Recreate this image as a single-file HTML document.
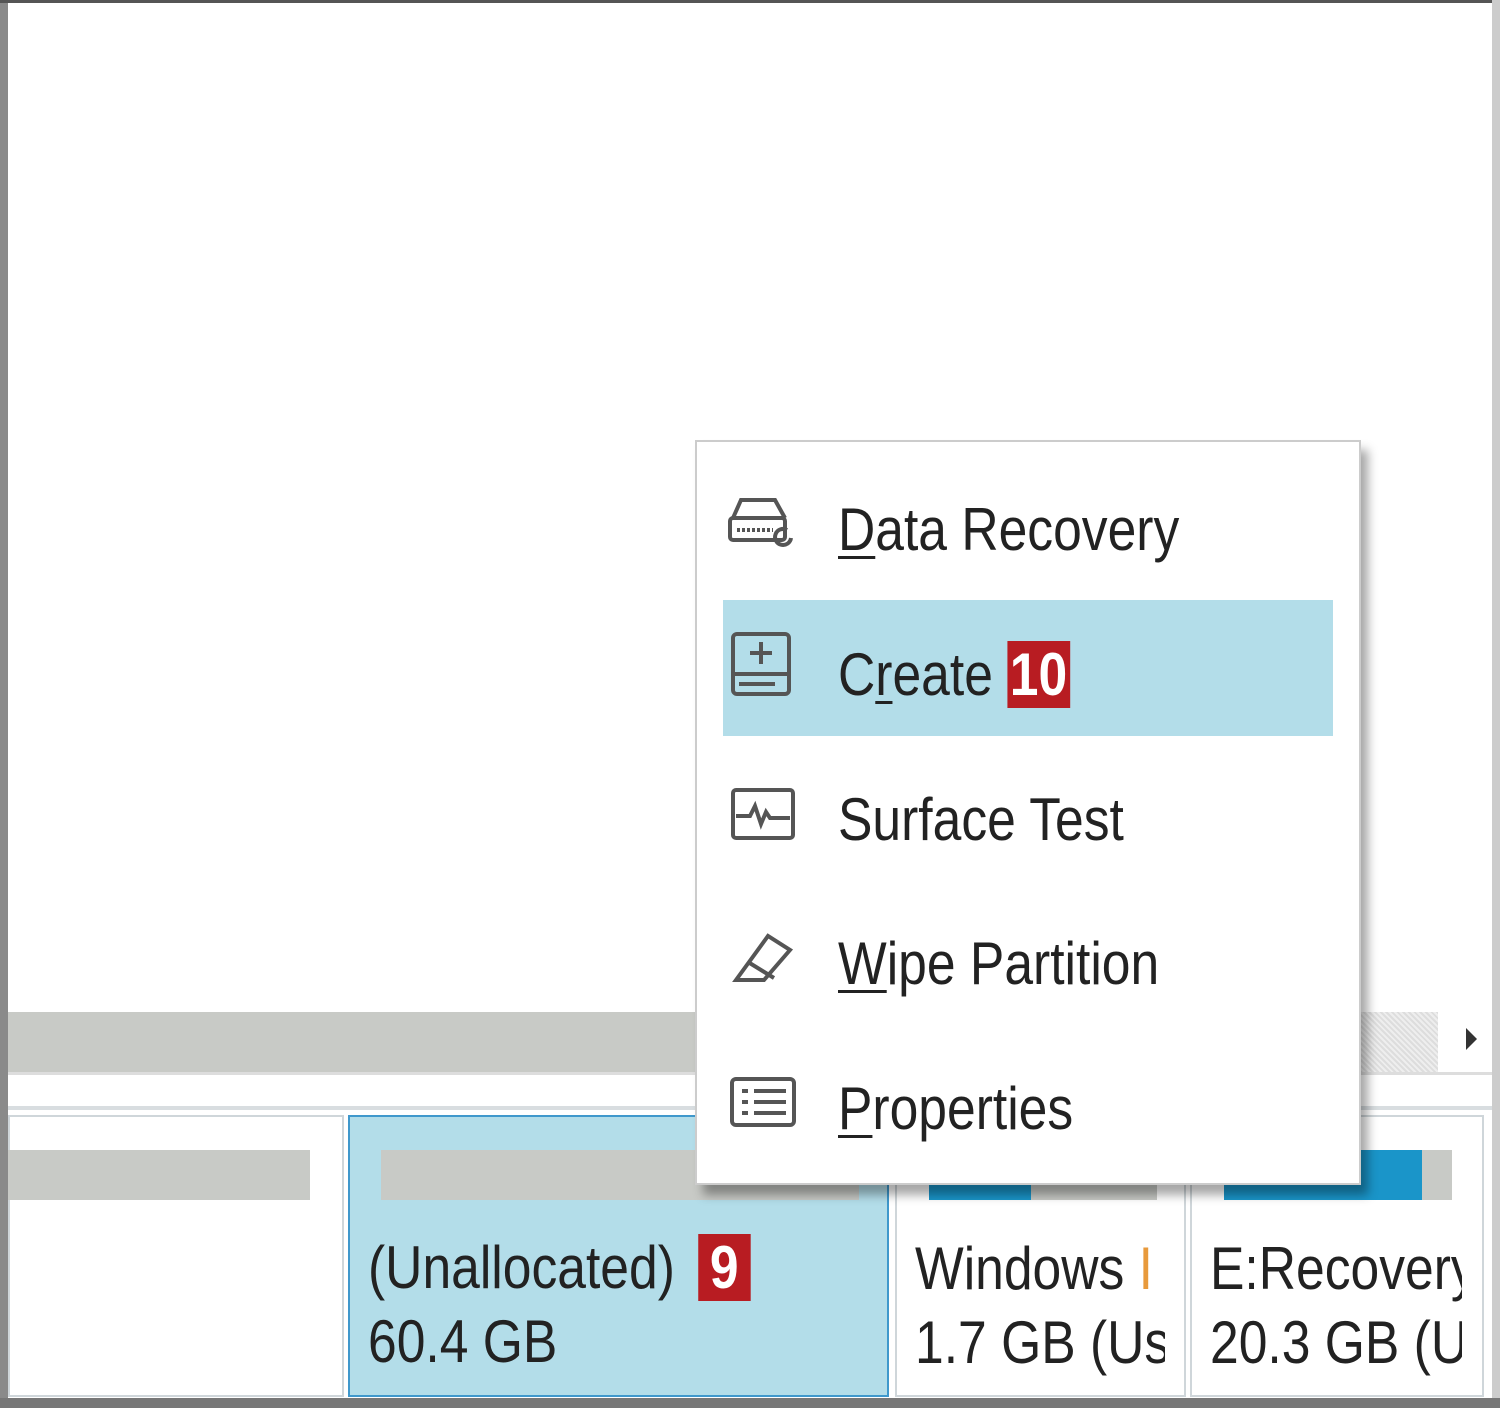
<!DOCTYPE html>
<html><head><meta charset="utf-8"><style>
*{margin:0;padding:0;box-sizing:border-box}
body{width:1500px;height:1408px;background:#fff;position:relative;overflow:hidden;font-family:"Liberation Sans",sans-serif;color:#222}
.abs{position:absolute}
.t{position:absolute;white-space:nowrap;font-size:60px;transform:scaleX(.86);transform-origin:left top;line-height:1}
.u{text-decoration:underline;text-decoration-thickness:3px;text-underline-offset:6px}
.badge{background:#b81c22;color:#fff;font-weight:bold;padding:0 3px}
</style></head><body>
<div class="abs" style="left:0;top:0;width:8px;height:1408px;background:#8a8a8a"></div>
<div class="abs" style="left:0;top:0;width:1500px;height:3px;background:#555"></div>
<div class="abs" style="left:1492px;top:0;width:8px;height:1408px;background:#ccc"></div>
<div class="abs" style="left:8px;top:1012px;width:1430px;height:60px;background:#c8cac6"></div>
<div class="abs" style="left:1360px;top:1012px;width:78px;height:60px;background:repeating-linear-gradient(45deg,#ddd 0 2px,#eee 2px 4px)"></div>
<div class="abs" style="left:1466px;top:1028px;width:0;height:0;border-left:11px solid #333;border-top:11px solid transparent;border-bottom:11px solid transparent"></div>
<div class="abs" style="left:8px;top:1072px;width:1484px;height:3px;background:#ddd"></div>
<div class="abs" style="left:8px;top:1106px;width:1484px;height:4px;background:#d8dde0"></div>
<div class="abs" style="left:0;top:1398px;width:1500px;height:10px;background:#777"></div>
<div class="abs" style="left:8px;top:1115px;width:336px;height:282px;border:2px solid #cfd6da;background:#fff"></div>
<div class="abs" style="left:8px;top:1150px;width:302px;height:50px;background:#c8cac6"></div>
<div class="abs" style="left:348px;top:1115px;width:541px;height:282px;border:2px solid #3f98cc;background:#b3dde9"></div>
<div class="abs" style="left:381px;top:1150px;width:478px;height:50px;background:#c8cac6"></div>
<div class="t" style="left:368px;top:1238px">(Unallocated) <span class="badge" style="padding:0 14px;margin-left:10px">9</span></div>
<div class="t" style="left:368px;top:1312px">60.4 GB</div>
<div class="abs" style="left:895px;top:1115px;width:291px;height:282px;border:2px solid #cfd6da;background:#fff;overflow:hidden">
 <div class="abs" style="left:32px;top:33px;width:228px;height:50px;background:#c8cac6"></div>
 <div class="abs" style="left:32px;top:33px;width:102px;height:50px;background:#1a95c9"></div>
 <div class="abs" style="left:18px;top:0;width:250px;height:280px;overflow:hidden">
 <div class="t" style="left:0;top:122px">Windows <span style="color:#e89a3c">I</span></div>
 <div class="t" style="left:0;top:196px">1.7 GB (Us</div></div>
</div>
<div class="abs" style="left:1190px;top:1115px;width:294px;height:282px;border:2px solid #cfd6da;background:#fff;overflow:hidden">
 <div class="abs" style="left:32px;top:33px;width:228px;height:50px;background:#c8cac6"></div>
 <div class="abs" style="left:32px;top:33px;width:198px;height:50px;background:#1a95c9"></div>
 <div class="abs" style="left:18px;top:0;width:252px;height:280px;overflow:hidden">
 <div class="t" style="left:0;top:122px">E:Recovery</div>
 <div class="t" style="left:0;top:196px">20.3 GB (U</div></div>
</div>
<div class="abs" style="left:703px;top:450px;width:665px;height:745px;background:rgba(0,0,0,.35);filter:blur(5px)"></div>
<div class="abs" style="left:695px;top:440px;width:666px;height:745px;background:#fff;border:2px solid #ccc"></div>
<div class="abs" style="left:723px;top:600px;width:610px;height:136px;background:#b3dde9"></div>
<svg class="abs" style="left:725px;top:490px" width="75" height="60" viewBox="0 0 75 60" fill="none" stroke="#555" stroke-width="4">
<path d="M8 28 L16 10 H50 L60 28"/><rect x="5" y="28" width="55" height="22" rx="3"/><path d="M12 40h36" stroke-dasharray="3 2"/><path d="M62 40a8 8 0 1 0 4 8"/></svg>
<svg class="abs" style="left:727px;top:630px" width="70" height="70" viewBox="0 0 70 70" fill="none" stroke="#555" stroke-width="4">
<rect x="6" y="4" width="56" height="60" rx="4"/><path d="M6 44h56M34 12v22M23 23h22M12 54h36"/></svg>
<svg class="abs" style="left:728px;top:786px" width="70" height="60" viewBox="0 0 70 60" fill="none" stroke="#555" stroke-width="4">
<rect x="5" y="4" width="60" height="48" rx="3"/><path d="M8 30h14l5-10 6 18 5-12 4 6h20"/></svg>
<svg class="abs" style="left:728px;top:928px" width="70" height="60" viewBox="0 0 70 60" fill="none" stroke="#555" stroke-width="4">
<path d="M8 52 L40 8 L62 22 L36 52 Z M20 34 L46 50"/></svg>
<svg class="abs" style="left:728px;top:1075px" width="70" height="55" viewBox="0 0 70 55" fill="none" stroke="#555" stroke-width="4">
<rect x="4" y="4" width="62" height="46" rx="4"/><path d="M14 16h6M26 16h32M14 27h6M26 27h32M14 38h6M26 38h32"/></svg>
<div class="t" style="left:838px;top:500px"><span class="u">D</span>ata Recovery</div>
<div class="t" style="left:838px;top:645px">C<span class="u">r</span>eate <span class="badge">10</span></div>
<div class="t" style="left:838px;top:790px">Surface Test</div>
<div class="t" style="left:838px;top:934px"><span class="u">W</span>ipe Partition</div>
<div class="t" style="left:838px;top:1079px"><span class="u">P</span>roperties</div>
</body></html>
